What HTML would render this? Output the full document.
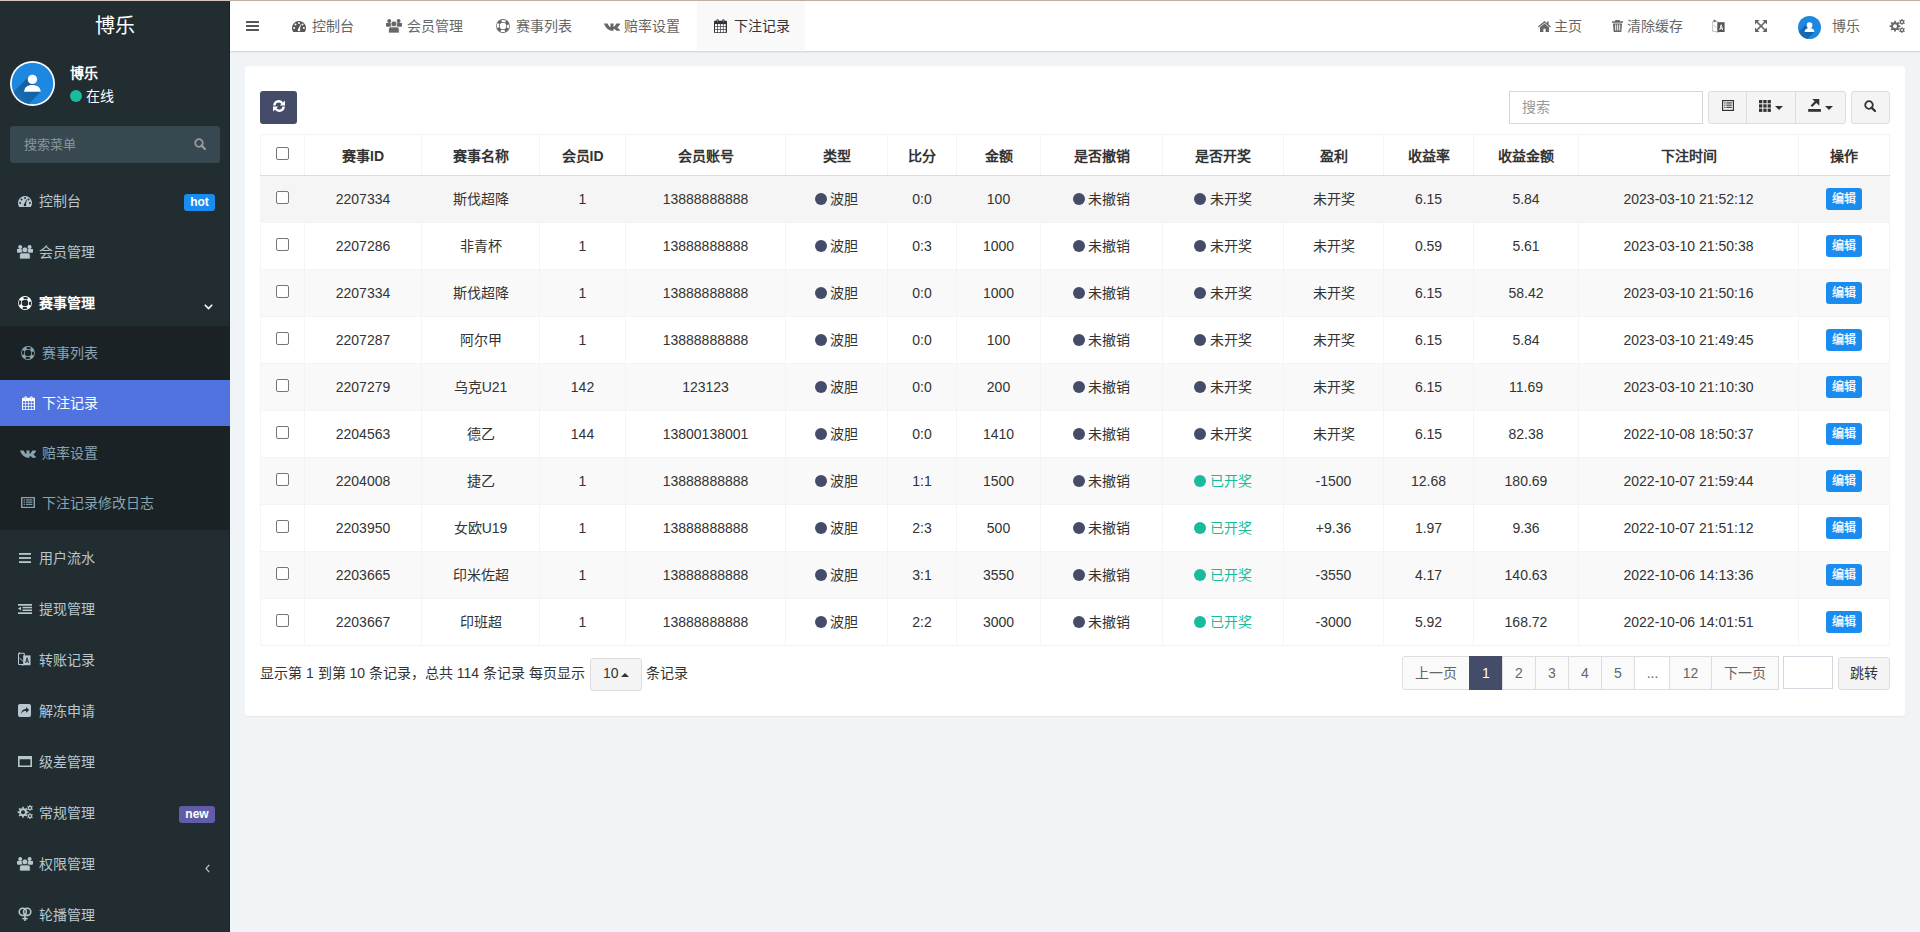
<!DOCTYPE html><html lang="zh-CN"><head><meta charset="utf-8"><title>下注记录</title><style>
*{box-sizing:border-box}
html,body{margin:0;padding:0}
body{width:1920px;height:932px;overflow:hidden;position:relative;background:#f1f4f6;font-family:"Liberation Sans",sans-serif;font-size:14px;color:#333}
.abs{position:absolute}
.t{position:absolute;white-space:nowrap;line-height:16px}
svg{display:block}
.ico{position:absolute}
#topline{position:absolute;left:0;top:0;width:1920px;height:1px;background:#bfaea8}
#topline2{position:absolute;left:0;top:0;width:230px;height:1px;background:#d6c6bf}
#sidebar{position:absolute;left:0;top:0;width:230px;height:932px;background:#222d32;border-right:1px solid #1a2429}
#header{position:absolute;left:230px;top:0;width:1690px;height:51px;background:#fff;box-shadow:0 1px 1px rgba(0,0,0,.08),0 2px 2px rgba(0,0,0,.03)}
.menu .t{color:#b8c7ce}
.sub .t{color:#8aa4af}
#panel{position:absolute;left:245px;top:66px;width:1660px;height:650px;background:#fff;border-radius:3px;box-shadow:0 1px 1px rgba(0,0,0,.05)}
table{position:absolute;left:260px;top:134px;border-collapse:collapse;table-layout:fixed;width:1630px}
td,th{border:1px solid #f4f4f4;text-align:center;padding:0;white-space:nowrap;font-size:14px;line-height:20px;color:#333;vertical-align:middle}
th{height:41px;font-weight:bold;border-bottom:1px solid #ddd;padding-top:1px}
td{height:47px}
tr.odd td{background:#f9f9f9}
tr.hov td{background:#f5f5f5}
.cb{display:inline-block;width:13px;height:13px;border:1px solid #767676;border-radius:2px;background:#fff;vertical-align:middle;position:relative;top:-3px}
.dot{display:inline-block;width:12px;height:12px;border-radius:50%;background:#444c69;vertical-align:middle;margin-right:3.6px;position:relative;top:-1px}
.dot.g{background:#18bc9c}
.green{color:#18bc9c}
.edit{display:inline-block;width:36px;height:22px;line-height:22px;background:#1a8cf0;border-radius:3px;color:#fff;font-size:12px;vertical-align:middle;-webkit-text-stroke:.25px #fff}
.btn{position:absolute;background:#f4f4f4;border:1px solid #ddd;border-radius:3px}
.pg{position:absolute;top:656px;height:34px;border:1px solid #ddd;background:#fafafa;color:#666;text-align:center;line-height:32px;font-size:14px}
</style></head><body>
<div id="sidebar">
<div class="t" style="left:95px;top:15px;font-size:20px;line-height:22px;color:#fff">博乐</div>
<div class="ico" style="left:10px;top:61px"><svg width="45" height="45" viewBox="0 0 45 45"><defs><clipPath id="cp45"><circle cx="22.5" cy="22.5" r="20.8"/></clipPath><linearGradient id="lg45" x1="0.75" y1="0.25" x2="0.1" y2="0.9"><stop offset="0" stop-color="#0d3f70" stop-opacity=".55"/><stop offset="1" stop-color="#0d3f70" stop-opacity=".15"/></linearGradient></defs><circle cx="22.5" cy="22.5" r="22.5" fill="#fff"/><circle cx="22.5" cy="22.5" r="20.8" fill="#1e88e0"/><g clip-path="url(#cp45)"><path d="M19 15.3 L30.7 30.8 L0.7 60.8 L-11 45.3 Z" fill="url(#lg45)"/></g><circle cx="22.4" cy="18.4" r="4.7" fill="#fff"/><path d="M14.1 30.8C14.1 26.6 17.6 23.9 22.4 23.9S30.7 26.6 30.7 30.8Z" fill="#fff"/></svg></div>
<div class="t" style="left:70px;top:65px;color:#fff;font-weight:bold">博乐</div>
<div class="ico" style="left:70px;top:90px"><svg width="12" height="12" viewBox="0 0 12 12"><circle cx="6" cy="6" r="6" fill="#18bc9c"/></svg></div>
<div class="t" style="left:86px;top:88px;color:#fff">在线</div>
<div class="abs" style="left:10px;top:126px;width:210px;height:37px;background:#374850;border-radius:3px"></div>
<div class="t" style="left:24px;top:137px;color:#8b979c;font-size:13px">搜索菜单</div>
<div class="ico" style="left:194px;top:138px"><svg width="12" height="12" viewBox="0 0 12 12"><circle cx="5" cy="5" r="3.8" fill="none" stroke="#999" stroke-width="1.8"/><line x1="7.6" y1="7.6" x2="11" y2="11" stroke="#999" stroke-width="2.2" stroke-linecap="round"/></svg></div>
<div class="ico" style="left:18px;top:196px"><svg width="14" height="11" viewBox="0 0 14 11"><path fill="#b8c7ce" d="M1.26 11A7 7 0 1 1 12.74 11Z"/><g fill="#222d32"><circle cx="7" cy="2.1" r="1"/><circle cx="3.5" cy="3.6" r="1"/><circle cx="10.5" cy="3.6" r="1"/><circle cx="2.1" cy="7.1" r="1"/><circle cx="11.9" cy="7.1" r="1"/><circle cx="7" cy="8.9" r="1.3"/><path d="M6.2 8.6L8.3 3.4 8.9 3.6 7.8 9z"/></g></svg></div><div class="t" style="left:39px;top:193px;color:#b8c7ce;">控制台</div><div class="abs" style="left:184px;top:194px;width:31px;height:17px;background:#1a8cf0;border-radius:3px;color:#fff;font-weight:bold;font-size:12px;line-height:17px;text-align:center">hot</div>
<div class="ico" style="left:17px;top:245px"><svg width="16" height="14" viewBox="0 0 16 14"><g fill="#b8c7ce"><circle cx="3.2" cy="2" r="2"/><circle cx="12.6" cy="2" r="2"/><path d="M0 4.2Q0 3.9 .4 3.9H5.3V7.8H1Q0 7.8 0 6.8z"/><path d="M16 4.2Q16 3.9 15.6 3.9H10.7V7.8H15Q16 7.8 16 6.8z"/></g><g fill="#b8c7ce" stroke="#222d32" stroke-width=".7"><circle cx="7.9" cy="4.9" r="2.9"/><path d="M2.6 14V9.9Q2.6 7.9 4.6 7.9H11.2Q13.2 7.9 13.2 9.9V14z"/></g></svg></div><div class="t" style="left:39px;top:244px;color:#b8c7ce;">会员管理</div>
<div class="ico" style="left:18px;top:296px"><svg width="14" height="14" viewBox="0 0 14 14"><circle cx="7" cy="7" r="5.1" fill="none" stroke="#fff" stroke-width="3.6"/><circle cx="7" cy="7" r="5.1" fill="none" stroke="#222d32" stroke-width="2.0" stroke-dasharray="4.2 3.81" stroke-dashoffset="2.1"/></svg></div><div class="t" style="left:39px;top:295px;color:#fff;font-weight:bold;">赛事管理</div><div class="ico" style="left:204px;top:304px"><svg width="9" height="6" viewBox="0 0 9 6"><path d="M.8 .8L4.5 4.5 8.2 .8" fill="none" stroke="#fff" stroke-width="1.6"/></svg></div>
<div class="abs" style="left:0;top:326px;width:229px;height:204px;background:#1a2226"></div>
<div class="abs" style="left:0;top:380px;width:230px;height:46px;background:#5073df"></div>
<div class="ico" style="left:21px;top:346px"><svg width="14" height="14" viewBox="0 0 14 14"><circle cx="7" cy="7" r="5.1" fill="none" stroke="#8aa4af" stroke-width="3.6"/><circle cx="7" cy="7" r="5.1" fill="none" stroke="#1a2226" stroke-width="2.0" stroke-dasharray="4.2 3.81" stroke-dashoffset="2.1"/></svg></div>
<div class="t" style="left:42px;top:345px;color:#8aa4af">赛事列表</div>
<div class="ico" style="left:22px;top:396px"><svg width="13" height="14" viewBox="0 0 13 14"><rect x="0" y="1.8" width="13" height="12.2" rx=".8" fill="#fff"/><rect x="1.00" y="5.10" width="2.2" height="2.25" fill="#5073df"/><rect x="1.00" y="8.05" width="2.2" height="2.25" fill="#5073df"/><rect x="1.00" y="11.00" width="2.2" height="2.25" fill="#5073df"/><rect x="3.85" y="5.10" width="2.2" height="2.25" fill="#5073df"/><rect x="3.85" y="8.05" width="2.2" height="2.25" fill="#5073df"/><rect x="3.85" y="11.00" width="2.2" height="2.25" fill="#5073df"/><rect x="6.70" y="5.10" width="2.2" height="2.25" fill="#5073df"/><rect x="6.70" y="8.05" width="2.2" height="2.25" fill="#5073df"/><rect x="6.70" y="11.00" width="2.2" height="2.25" fill="#5073df"/><rect x="9.55" y="5.10" width="2.2" height="2.25" fill="#5073df"/><rect x="9.55" y="8.05" width="2.2" height="2.25" fill="#5073df"/><rect x="9.55" y="11.00" width="2.2" height="2.25" fill="#5073df"/><rect x="2.5" y="0.3" width="2.2" height="3.6" rx="1.1" fill="#fff"/><rect x="8.3" y="0.3" width="2.2" height="3.6" rx="1.1" fill="#fff"/><rect x="3.3" y="1.1" width=".6" height="2.2" fill="#5073df" opacity=".6"/><rect x="9.1" y="1.1" width=".6" height="2.2" fill="#5073df" opacity=".6"/></svg></div>
<div class="t" style="left:42px;top:395px;color:#fff">下注记录</div>
<div class="ico" style="left:20px;top:450px"><svg width="16" height="8" viewBox="0 0 16 10" preserveAspectRatio="none"><path fill="#8aa4af" d="M0 .6h3.2c.2 0 .4.1.5.3.7 1.7 1.6 3.4 2.4 4.1.2.2.4.1.4-.2V1.2c0-.3-.2-.5-.4-.6h3.1c.2 0 .3.2.3.4v3.6c0 .3.2.4.4.2.9-.9 1.8-2.5 2.3-3.9.1-.2.2-.3.4-.3H16c.3 0 .4.2.3.5-.6 1.6-2.3 3.6-2.6 4-.2.3-.2.4 0 .7.3.4 2 1.9 2.3 3.5.1.3-.1.5-.3.5h-3c-.2 0-.4-.1-.5-.3-.7-1-1.5-2-2.2-2.3-.2-.1-.4 0-.4.3v1.9c0 .2-.2.4-.4.4H8.3C5.5 9.8 1.6 6.5 0 1 -.1.8 0 .6 0 .6z"/></svg></div>
<div class="t" style="left:42px;top:445px;color:#8aa4af">赔率设置</div>
<div class="ico" style="left:21px;top:497px"><svg width="14" height="11" viewBox="0 0 12 11" preserveAspectRatio="none"><rect x=".6" y=".6" width="10.8" height="9.8" fill="none" stroke="#8aa4af" stroke-width="1.2"/><g fill="#8aa4af"><rect x="2.2" y="2.4" width="1.3" height="1.1"/><rect x="4.3" y="2.4" width="5.5" height="1.1"/><rect x="2.2" y="4.6" width="1.3" height="1.1"/><rect x="4.3" y="4.6" width="5.5" height="1.1"/><rect x="2.2" y="6.8" width="1.3" height="1.1"/><rect x="4.3" y="6.8" width="5.5" height="1.1"/></g></svg></div>
<div class="t" style="left:42px;top:495px;color:#8aa4af">下注记录修改日志</div>
<div class="ico" style="left:19px;top:553px"><svg width="12" height="10" viewBox="0 0 12 10"><g fill="#b8c7ce"><rect y="0" width="12" height="1.8"/><rect y="4.1" width="12" height="1.8"/><rect y="8.2" width="12" height="1.8"/></g></svg></div>
<div class="t" style="left:39px;top:550px;color:#b8c7ce">用户流水</div>
<div class="ico" style="left:18px;top:604px"><svg width="14" height="10" viewBox="0 0 14 10"><g fill="#b8c7ce"><rect x="0" y="0" width="14" height="1.7"/><rect x="4.5" y="2.8" width="9.5" height="1.5"/><rect x="4.5" y="5.5" width="9.5" height="1.5"/><rect x="0" y="8.3" width="14" height="1.7"/><path d="M0 4.6L3 2.8v3.6z"/></g></svg></div>
<div class="t" style="left:39px;top:601px;color:#b8c7ce">提现管理</div>
<div class="ico" style="left:18px;top:652px"><svg width="13" height="14" viewBox="0 0 13 14"><path d="M.5 1.3h5.8v11.2H.5z" fill="none" stroke="#b8c7ce" stroke-width="1"/><path d="M1.8 5.8c.8 1.8 2 2.8 3.8 3.3" fill="none" stroke="#b8c7ce" stroke-width=".9"/><path d="M5.2 3.4h7.3v9.8H5.2z" fill="#b8c7ce"/><path d="M7.2 11l1.4-5.6h1L11 11h-1l-.3-1.3H8.5L8.2 11zm1.5-2.2h.8l-.4-1.7z" fill="#222d32"/><path d="M1 0l1.6 1.3L1 2.4z" fill="#b8c7ce"/><path d="M3 13.2l2.2-.8v1.4z" fill="#b8c7ce"/></svg></div>
<div class="t" style="left:39px;top:652px;color:#b8c7ce">转账记录</div>
<div class="ico" style="left:18px;top:704px"><svg width="13" height="13" viewBox="0 0 13 13"><rect x="0" y="0" width="13" height="13" rx="2" fill="#b8c7ce"/><path d="M3 10.2C3.3 6.8 5.3 5 8 5V3l3.2 2.9L8 8.8V6.8C5.9 6.8 4.3 7.8 3 10.2z" fill="#222d32"/></svg></div>
<div class="t" style="left:39px;top:703px;color:#b8c7ce">解冻申请</div>
<div class="ico" style="left:18px;top:756px"><svg width="14" height="11" viewBox="0 0 14 11"><path fill="#b8c7ce" fill-rule="evenodd" d="M0 0h14v11H0zM1.6 3.2v6.2h10.8V3.2z"/></svg></div>
<div class="t" style="left:39px;top:754px;color:#b8c7ce">级差管理</div>
<div class="ico" style="left:17px;top:805px"><svg width="16" height="14" viewBox="0 0 16 14"><circle cx="6" cy="7.2" r="3.9" fill="#b8c7ce"/><rect x="5.15" y="1.80" width="1.7" height="2.10" fill="#b8c7ce" transform="rotate(0.0 6 7.2)"/><rect x="5.15" y="1.80" width="1.7" height="2.10" fill="#b8c7ce" transform="rotate(45.0 6 7.2)"/><rect x="5.15" y="1.80" width="1.7" height="2.10" fill="#b8c7ce" transform="rotate(90.0 6 7.2)"/><rect x="5.15" y="1.80" width="1.7" height="2.10" fill="#b8c7ce" transform="rotate(135.0 6 7.2)"/><rect x="5.15" y="1.80" width="1.7" height="2.10" fill="#b8c7ce" transform="rotate(180.0 6 7.2)"/><rect x="5.15" y="1.80" width="1.7" height="2.10" fill="#b8c7ce" transform="rotate(225.0 6 7.2)"/><rect x="5.15" y="1.80" width="1.7" height="2.10" fill="#b8c7ce" transform="rotate(270.0 6 7.2)"/><rect x="5.15" y="1.80" width="1.7" height="2.10" fill="#b8c7ce" transform="rotate(315.0 6 7.2)"/><circle cx="6" cy="7.2" r="2.0" fill="#222d32"/><circle cx="13" cy="2.9" r="2.2" fill="#b8c7ce"/><rect x="12.45" y="-0.10" width="1.1" height="1.40" fill="#b8c7ce" transform="rotate(0.0 13 2.9)"/><rect x="12.45" y="-0.10" width="1.1" height="1.40" fill="#b8c7ce" transform="rotate(60.0 13 2.9)"/><rect x="12.45" y="-0.10" width="1.1" height="1.40" fill="#b8c7ce" transform="rotate(120.0 13 2.9)"/><rect x="12.45" y="-0.10" width="1.1" height="1.40" fill="#b8c7ce" transform="rotate(180.0 13 2.9)"/><rect x="12.45" y="-0.10" width="1.1" height="1.40" fill="#b8c7ce" transform="rotate(240.0 13 2.9)"/><rect x="12.45" y="-0.10" width="1.1" height="1.40" fill="#b8c7ce" transform="rotate(300.0 13 2.9)"/><circle cx="13" cy="2.9" r="1.0" fill="#222d32"/><circle cx="13" cy="11.1" r="2.2" fill="#b8c7ce"/><rect x="12.45" y="8.10" width="1.1" height="1.40" fill="#b8c7ce" transform="rotate(0.0 13 11.1)"/><rect x="12.45" y="8.10" width="1.1" height="1.40" fill="#b8c7ce" transform="rotate(60.0 13 11.1)"/><rect x="12.45" y="8.10" width="1.1" height="1.40" fill="#b8c7ce" transform="rotate(120.0 13 11.1)"/><rect x="12.45" y="8.10" width="1.1" height="1.40" fill="#b8c7ce" transform="rotate(180.0 13 11.1)"/><rect x="12.45" y="8.10" width="1.1" height="1.40" fill="#b8c7ce" transform="rotate(240.0 13 11.1)"/><rect x="12.45" y="8.10" width="1.1" height="1.40" fill="#b8c7ce" transform="rotate(300.0 13 11.1)"/><circle cx="13" cy="11.1" r="1.0" fill="#222d32"/></svg></div>
<div class="t" style="left:39px;top:805px;color:#b8c7ce">常规管理</div>
<div class="ico" style="left:17px;top:857px"><svg width="16" height="14" viewBox="0 0 16 14"><g fill="#b8c7ce"><circle cx="3.2" cy="2" r="2"/><circle cx="12.6" cy="2" r="2"/><path d="M0 4.2Q0 3.9 .4 3.9H5.3V7.8H1Q0 7.8 0 6.8z"/><path d="M16 4.2Q16 3.9 15.6 3.9H10.7V7.8H15Q16 7.8 16 6.8z"/></g><g fill="#b8c7ce" stroke="#222d32" stroke-width=".7"><circle cx="7.9" cy="4.9" r="2.9"/><path d="M2.6 14V9.9Q2.6 7.9 4.6 7.9H11.2Q13.2 7.9 13.2 9.9V14z"/></g></svg></div>
<div class="t" style="left:39px;top:856px;color:#b8c7ce">权限管理</div>
<div class="ico" style="left:18px;top:907px"><svg width="14" height="14" viewBox="0 0 14 14"><g fill="none" stroke="#b8c7ce" stroke-width="1.6"><circle cx="4.8" cy="4.8" r="3.6"/><circle cx="9.2" cy="4.8" r="3.6"/><line x1="7" y1="8.4" x2="7" y2="14"/><line x1="4.4" y1="11.6" x2="9.6" y2="11.6"/></g></svg></div>
<div class="t" style="left:39px;top:907px;color:#b8c7ce">轮播管理</div>
<div class="abs" style="left:179px;top:806px;width:36px;height:17px;background:#605ca8;border-radius:3px;color:#fff;font-weight:bold;font-size:12px;line-height:17px;text-align:center">new</div>
<div class="ico" style="left:205px;top:864px"><svg width="5" height="9" viewBox="0 0 5 9"><path d="M4.2 .8L1 4.5l3.2 3.7" fill="none" stroke="#b8c7ce" stroke-width="1.2"/></svg></div>
</div>
<div id="header"></div>
<div class="abs" style="left:697px;top:1px;width:108px;height:49px;background:#f9f9f9"></div>
<div class="ico" style="left:246px;top:21px"><svg width="13" height="10" viewBox="0 0 13 10"><g fill="#555"><rect x="0" y="0" width="13" height="2" rx="0.5"/><rect x="0" y="4" width="13" height="2" rx="0.5"/><rect x="0" y="8" width="13" height="2" rx="0.5"/></g></svg></div>
<div class="ico" style="left:292px;top:21px"><svg width="14" height="11" viewBox="0 0 14 11"><path fill="#555" d="M1.26 11A7 7 0 1 1 12.74 11Z"/><g fill="#fff"><circle cx="7" cy="2.1" r="1"/><circle cx="3.5" cy="3.6" r="1"/><circle cx="10.5" cy="3.6" r="1"/><circle cx="2.1" cy="7.1" r="1"/><circle cx="11.9" cy="7.1" r="1"/><circle cx="7" cy="8.9" r="1.3"/><path d="M6.2 8.6L8.3 3.4 8.9 3.6 7.8 9z"/></g></svg></div>
<div class="t" style="left:312px;top:18px;color:#666">控制台</div>
<div class="ico" style="left:386px;top:19px"><svg width="16" height="14" viewBox="0 0 16 14"><g fill="#666"><circle cx="3.2" cy="2" r="2"/><circle cx="12.6" cy="2" r="2"/><path d="M0 4.2Q0 3.9 .4 3.9H5.3V7.8H1Q0 7.8 0 6.8z"/><path d="M16 4.2Q16 3.9 15.6 3.9H10.7V7.8H15Q16 7.8 16 6.8z"/></g><g fill="#666" stroke="#fff" stroke-width=".7"><circle cx="7.9" cy="4.9" r="2.9"/><path d="M2.6 14V9.9Q2.6 7.9 4.6 7.9H11.2Q13.2 7.9 13.2 9.9V14z"/></g></svg></div>
<div class="t" style="left:407px;top:18px;color:#666">会员管理</div>
<div class="ico" style="left:496px;top:19px"><svg width="14" height="14" viewBox="0 0 14 14"><circle cx="7" cy="7" r="5.1" fill="none" stroke="#666" stroke-width="3.6"/><circle cx="7" cy="7" r="5.1" fill="none" stroke="#fff" stroke-width="2.0" stroke-dasharray="4.2 3.81" stroke-dashoffset="2.1"/></svg></div>
<div class="t" style="left:516px;top:18px;color:#666">赛事列表</div>
<div class="ico" style="left:604px;top:23px"><svg width="16" height="8" viewBox="0 0 16 10" preserveAspectRatio="none"><path fill="#666" d="M0 .6h3.2c.2 0 .4.1.5.3.7 1.7 1.6 3.4 2.4 4.1.2.2.4.1.4-.2V1.2c0-.3-.2-.5-.4-.6h3.1c.2 0 .3.2.3.4v3.6c0 .3.2.4.4.2.9-.9 1.8-2.5 2.3-3.9.1-.2.2-.3.4-.3H16c.3 0 .4.2.3.5-.6 1.6-2.3 3.6-2.6 4-.2.3-.2.4 0 .7.3.4 2 1.9 2.3 3.5.1.3-.1.5-.3.5h-3c-.2 0-.4-.1-.5-.3-.7-1-1.5-2-2.2-2.3-.2-.1-.4 0-.4.3v1.9c0 .2-.2.4-.4.4H8.3C5.5 9.8 1.6 6.5 0 1 -.1.8 0 .6 0 .6z"/></svg></div>
<div class="t" style="left:624px;top:18px;color:#666">赔率设置</div>
<div class="ico" style="left:714px;top:19px"><svg width="13" height="14" viewBox="0 0 13 14"><rect x="0" y="1.8" width="13" height="12.2" rx=".8" fill="#333"/><rect x="1.00" y="5.10" width="2.2" height="2.25" fill="#fff"/><rect x="1.00" y="8.05" width="2.2" height="2.25" fill="#fff"/><rect x="1.00" y="11.00" width="2.2" height="2.25" fill="#fff"/><rect x="3.85" y="5.10" width="2.2" height="2.25" fill="#fff"/><rect x="3.85" y="8.05" width="2.2" height="2.25" fill="#fff"/><rect x="3.85" y="11.00" width="2.2" height="2.25" fill="#fff"/><rect x="6.70" y="5.10" width="2.2" height="2.25" fill="#fff"/><rect x="6.70" y="8.05" width="2.2" height="2.25" fill="#fff"/><rect x="6.70" y="11.00" width="2.2" height="2.25" fill="#fff"/><rect x="9.55" y="5.10" width="2.2" height="2.25" fill="#fff"/><rect x="9.55" y="8.05" width="2.2" height="2.25" fill="#fff"/><rect x="9.55" y="11.00" width="2.2" height="2.25" fill="#fff"/><rect x="2.5" y="0.3" width="2.2" height="3.6" rx="1.1" fill="#333"/><rect x="8.3" y="0.3" width="2.2" height="3.6" rx="1.1" fill="#333"/><rect x="3.3" y="1.1" width=".6" height="2.2" fill="#fff" opacity=".6"/><rect x="9.1" y="1.1" width=".6" height="2.2" fill="#fff" opacity=".6"/></svg></div>
<div class="t" style="left:734px;top:18px;color:#333">下注记录</div>
<div class="ico" style="left:1538px;top:21px"><svg width="13" height="11" viewBox="0 0 13 11"><path fill="#666" d="M6.5 0L0 5.4l.8 1 5.7-4.7 5.7 4.7.8-1L10.6 3.6V.6H9v1.7zM2 6.3V11h3.4V7.8h2.2V11H11V6.3L6.5 2.6z"/></svg></div>
<div class="t" style="left:1554px;top:18px;color:#666">主页</div>
<div class="ico" style="left:1612px;top:20px"><svg width="11" height="12" viewBox="0 0 11 12"><path fill="#666" fill-rule="evenodd" d="M3.5 0h4l.6 1.3H11v1.4H0V1.3h2.9zM1 3.4h9l-.6 8c0 .4-.4.6-.8.6H2.4c-.4 0-.8-.2-.8-.6zM3.2 4.6v6h1v-6zm2 0v6h1v-6zm2 0v6h1v-6z"/></svg></div>
<div class="t" style="left:1627px;top:18px;color:#666">清除缓存</div>
<div class="ico" style="left:1712px;top:19px"><svg width="13" height="14" viewBox="0 0 13 14"><path d="M.6 2.8h5.4v9.6H.6z" fill="none" stroke="#b8b8c8" stroke-width=".9"/><path d="M2 6c.8 1.6 1.8 2.6 3.4 3" fill="none" stroke="#d0b890" stroke-width=".8"/><path d="M5.4 3.2h7.2v9.8H5.4z" fill="#555"/><path d="M7.3 11l1.4-5.6h1L11.1 11h-1l-.3-1.3H8.6L8.3 11zm1.5-2.2h.8l-.4-1.7z" fill="#fff"/><path d="M1.6 .6l3.2 1.4-3.2 1z" fill="#555"/><path d="M4 13.4h3.4" stroke="#c8c8d0" stroke-width=".7"/></svg></div>
<div class="ico" style="left:1755px;top:20px"><svg width="12" height="12" viewBox="0 0 12 12"><g fill="#666"><path d="M0 0h4.6L0 4.6z"/><path d="M12 0v4.6L7.4 0z"/><path d="M0 12V7.4L4.6 12z"/><path d="M12 12H7.4L12 7.4z"/></g><g stroke="#666" stroke-width="1.7"><line x1="1.5" y1="1.5" x2="10.5" y2="10.5"/><line x1="10.5" y1="1.5" x2="1.5" y2="10.5"/></g></svg></div>
<div class="ico" style="left:1798px;top:16px"><svg width="23" height="23" viewBox="0 0 45 45"><defs><clipPath id="cps"><circle cx="22.5" cy="22.5" r="22.5"/></clipPath><linearGradient id="lgs" x1="0.75" y1="0.25" x2="0.1" y2="0.9"><stop offset="0" stop-color="#0d3f70" stop-opacity=".55"/><stop offset="1" stop-color="#0d3f70" stop-opacity=".15"/></linearGradient></defs><circle cx="22.5" cy="22.5" r="22.5" fill="#1e88e0"/><g clip-path="url(#cps)"><path d="M18 14.3 L31.5 31.5 L1.5 61.5 L-12 44.3 Z" fill="url(#lgs)"/></g><circle cx="22.5" cy="18" r="5.6" fill="#fff"/><path d="M13 31.5C13 26.5 17 23.6 22.5 23.6S32 26.5 32 31.5Z" fill="#fff"/></svg></div>
<div class="t" style="left:1832px;top:18px;color:#666">博乐</div>
<div class="ico" style="left:1889px;top:19px"><svg width="16" height="14" viewBox="0 0 16 14"><circle cx="6" cy="7.2" r="3.9" fill="#666"/><rect x="5.15" y="1.80" width="1.7" height="2.10" fill="#666" transform="rotate(0.0 6 7.2)"/><rect x="5.15" y="1.80" width="1.7" height="2.10" fill="#666" transform="rotate(45.0 6 7.2)"/><rect x="5.15" y="1.80" width="1.7" height="2.10" fill="#666" transform="rotate(90.0 6 7.2)"/><rect x="5.15" y="1.80" width="1.7" height="2.10" fill="#666" transform="rotate(135.0 6 7.2)"/><rect x="5.15" y="1.80" width="1.7" height="2.10" fill="#666" transform="rotate(180.0 6 7.2)"/><rect x="5.15" y="1.80" width="1.7" height="2.10" fill="#666" transform="rotate(225.0 6 7.2)"/><rect x="5.15" y="1.80" width="1.7" height="2.10" fill="#666" transform="rotate(270.0 6 7.2)"/><rect x="5.15" y="1.80" width="1.7" height="2.10" fill="#666" transform="rotate(315.0 6 7.2)"/><circle cx="6" cy="7.2" r="2.0" fill="#fff"/><circle cx="13" cy="2.9" r="2.2" fill="#666"/><rect x="12.45" y="-0.10" width="1.1" height="1.40" fill="#666" transform="rotate(0.0 13 2.9)"/><rect x="12.45" y="-0.10" width="1.1" height="1.40" fill="#666" transform="rotate(60.0 13 2.9)"/><rect x="12.45" y="-0.10" width="1.1" height="1.40" fill="#666" transform="rotate(120.0 13 2.9)"/><rect x="12.45" y="-0.10" width="1.1" height="1.40" fill="#666" transform="rotate(180.0 13 2.9)"/><rect x="12.45" y="-0.10" width="1.1" height="1.40" fill="#666" transform="rotate(240.0 13 2.9)"/><rect x="12.45" y="-0.10" width="1.1" height="1.40" fill="#666" transform="rotate(300.0 13 2.9)"/><circle cx="13" cy="2.9" r="1.0" fill="#fff"/><circle cx="13" cy="11.1" r="2.2" fill="#666"/><rect x="12.45" y="8.10" width="1.1" height="1.40" fill="#666" transform="rotate(0.0 13 11.1)"/><rect x="12.45" y="8.10" width="1.1" height="1.40" fill="#666" transform="rotate(60.0 13 11.1)"/><rect x="12.45" y="8.10" width="1.1" height="1.40" fill="#666" transform="rotate(120.0 13 11.1)"/><rect x="12.45" y="8.10" width="1.1" height="1.40" fill="#666" transform="rotate(180.0 13 11.1)"/><rect x="12.45" y="8.10" width="1.1" height="1.40" fill="#666" transform="rotate(240.0 13 11.1)"/><rect x="12.45" y="8.10" width="1.1" height="1.40" fill="#666" transform="rotate(300.0 13 11.1)"/><circle cx="13" cy="11.1" r="1.0" fill="#fff"/></svg></div>
<div id="panel"></div>
<div class="abs" style="left:260px;top:91px;width:37px;height:33px;background:#444c69;border-radius:3px"></div>
<div class="ico" style="left:273px;top:100px"><svg width="12" height="12" viewBox="0 0 12 12"><g fill="none" stroke="#fff" stroke-width="2.4"><path d="M1.4 5.6A4.3 4.3 0 0 1 9.4 3.4"/><path d="M10.6 6.4A4.3 4.3 0 0 1 2.6 8.6"/></g><path fill="#fff" d="M12 .4v5.2H6.8z"/><path fill="#fff" d="M0 11.6V6.4h5.2z"/></svg></div>
<div class="abs" style="left:1509px;top:91px;width:194px;height:33px;border:1px solid #d2d6de;background:#fff"></div>
<div class="t" style="left:1522px;top:99px;color:#999">搜索</div>
<div class="btn" style="left:1708px;top:91px;width:138px;height:33px"></div>
<div class="abs" style="left:1746px;top:91px;width:1px;height:33px;background:#ddd"></div>
<div class="abs" style="left:1795px;top:91px;width:1px;height:33px;background:#ddd"></div>
<div class="ico" style="left:1722px;top:100px"><svg width="12" height="11" viewBox="0 0 12 11" preserveAspectRatio="none"><rect x=".6" y=".6" width="10.8" height="9.8" fill="none" stroke="#333" stroke-width="1.2"/><g fill="#333"><rect x="2.2" y="2.4" width="1.3" height="1.1"/><rect x="4.3" y="2.4" width="5.5" height="1.1"/><rect x="2.2" y="4.6" width="1.3" height="1.1"/><rect x="4.3" y="4.6" width="5.5" height="1.1"/><rect x="2.2" y="6.8" width="1.3" height="1.1"/><rect x="4.3" y="6.8" width="5.5" height="1.1"/></g></svg></div>
<div class="ico" style="left:1759px;top:100px"><svg width="12" height="12" viewBox="0 0 12 12"><rect x="0.0" y="0.0" width="3.3" height="3.3" fill="#333"/><rect x="0.0" y="4.3" width="3.3" height="3.3" fill="#333"/><rect x="0.0" y="8.6" width="3.3" height="3.3" fill="#333"/><rect x="4.3" y="0.0" width="3.3" height="3.3" fill="#333"/><rect x="4.3" y="4.3" width="3.3" height="3.3" fill="#333"/><rect x="4.3" y="8.6" width="3.3" height="3.3" fill="#333"/><rect x="8.6" y="0.0" width="3.3" height="3.3" fill="#333"/><rect x="8.6" y="4.3" width="3.3" height="3.3" fill="#333"/><rect x="8.6" y="8.6" width="3.3" height="3.3" fill="#333"/></svg></div>
<div class="ico" style="left:1775px;top:106px"><svg width="8" height="4" viewBox="0 0 8 4"><path d="M0 0h8L4 4z" fill="#333"/></svg></div>
<div class="ico" style="left:1808px;top:98px"><svg width="13" height="14" viewBox="0 0 13 14"><g fill="#333"><rect x="0.2" y="11" width="12.7" height="2.8"/><path d="M4.2 .9H11.3V7.8z"/></g><line x1="8" y1="3.6" x2="3.4" y2="8.2" stroke="#333" stroke-width="2.2"/></svg></div>
<div class="ico" style="left:1825px;top:106px"><svg width="8" height="4" viewBox="0 0 8 4"><path d="M0 0h8L4 4z" fill="#333"/></svg></div>
<div class="btn" style="left:1851px;top:91px;width:39px;height:33px"></div>
<div class="ico" style="left:1864px;top:100px"><svg width="12" height="12" viewBox="0 0 12 12"><circle cx="5" cy="5" r="3.8" fill="none" stroke="#333" stroke-width="1.8"/><line x1="7.6" y1="7.6" x2="11" y2="11" stroke="#333" stroke-width="2.2" stroke-linecap="round"/></svg></div>
<table><colgroup><col style="width:44px"><col style="width:117px"><col style="width:118px"><col style="width:86px"><col style="width:160px"><col style="width:102px"><col style="width:69px"><col style="width:84px"><col style="width:122px"><col style="width:121px"><col style="width:100px"><col style="width:90px"><col style="width:105px"><col style="width:220px"><col style="width:91px"></colgroup><thead><tr><th><span class="cb"></span></th><th>赛事ID</th><th>赛事名称</th><th>会员ID</th><th>会员账号</th><th>类型</th><th>比分</th><th>金额</th><th>是否撤销</th><th>是否开奖</th><th>盈利</th><th>收益率</th><th>收益金额</th><th>下注时间</th><th>操作</th></tr></thead><tbody><tr class="hov"><td><span class="cb"></span></td><td>2207334</td><td>斯伐超降</td><td>1</td><td>13888888888</td><td><span class="dot"></span>波胆</td><td>0:0</td><td>100</td><td><span class="dot"></span>未撤销</td><td><span class="dot"></span>未开奖</td><td>未开奖</td><td>6.15</td><td>5.84</td><td>2023-03-10 21:52:12</td><td><span class="edit">编辑</span></td></tr><tr class=""><td><span class="cb"></span></td><td>2207286</td><td>非青杯</td><td>1</td><td>13888888888</td><td><span class="dot"></span>波胆</td><td>0:3</td><td>1000</td><td><span class="dot"></span>未撤销</td><td><span class="dot"></span>未开奖</td><td>未开奖</td><td>0.59</td><td>5.61</td><td>2023-03-10 21:50:38</td><td><span class="edit">编辑</span></td></tr><tr class="odd"><td><span class="cb"></span></td><td>2207334</td><td>斯伐超降</td><td>1</td><td>13888888888</td><td><span class="dot"></span>波胆</td><td>0:0</td><td>1000</td><td><span class="dot"></span>未撤销</td><td><span class="dot"></span>未开奖</td><td>未开奖</td><td>6.15</td><td>58.42</td><td>2023-03-10 21:50:16</td><td><span class="edit">编辑</span></td></tr><tr class=""><td><span class="cb"></span></td><td>2207287</td><td>阿尔甲</td><td>1</td><td>13888888888</td><td><span class="dot"></span>波胆</td><td>0:0</td><td>100</td><td><span class="dot"></span>未撤销</td><td><span class="dot"></span>未开奖</td><td>未开奖</td><td>6.15</td><td>5.84</td><td>2023-03-10 21:49:45</td><td><span class="edit">编辑</span></td></tr><tr class="odd"><td><span class="cb"></span></td><td>2207279</td><td>乌克U21</td><td>142</td><td>123123</td><td><span class="dot"></span>波胆</td><td>0:0</td><td>200</td><td><span class="dot"></span>未撤销</td><td><span class="dot"></span>未开奖</td><td>未开奖</td><td>6.15</td><td>11.69</td><td>2023-03-10 21:10:30</td><td><span class="edit">编辑</span></td></tr><tr class=""><td><span class="cb"></span></td><td>2204563</td><td>德乙</td><td>144</td><td>13800138001</td><td><span class="dot"></span>波胆</td><td>0:0</td><td>1410</td><td><span class="dot"></span>未撤销</td><td><span class="dot"></span>未开奖</td><td>未开奖</td><td>6.15</td><td>82.38</td><td>2022-10-08 18:50:37</td><td><span class="edit">编辑</span></td></tr><tr class="odd"><td><span class="cb"></span></td><td>2204008</td><td>捷乙</td><td>1</td><td>13888888888</td><td><span class="dot"></span>波胆</td><td>1:1</td><td>1500</td><td><span class="dot"></span>未撤销</td><td><span class="dot g"></span><span class="green">已开奖</span></td><td>-1500</td><td>12.68</td><td>180.69</td><td>2022-10-07 21:59:44</td><td><span class="edit">编辑</span></td></tr><tr class=""><td><span class="cb"></span></td><td>2203950</td><td>女欧U19</td><td>1</td><td>13888888888</td><td><span class="dot"></span>波胆</td><td>2:3</td><td>500</td><td><span class="dot"></span>未撤销</td><td><span class="dot g"></span><span class="green">已开奖</span></td><td>+9.36</td><td>1.97</td><td>9.36</td><td>2022-10-07 21:51:12</td><td><span class="edit">编辑</span></td></tr><tr class="odd"><td><span class="cb"></span></td><td>2203665</td><td>印米佐超</td><td>1</td><td>13888888888</td><td><span class="dot"></span>波胆</td><td>3:1</td><td>3550</td><td><span class="dot"></span>未撤销</td><td><span class="dot g"></span><span class="green">已开奖</span></td><td>-3550</td><td>4.17</td><td>140.63</td><td>2022-10-06 14:13:36</td><td><span class="edit">编辑</span></td></tr><tr class=""><td><span class="cb"></span></td><td>2203667</td><td>印班超</td><td>1</td><td>13888888888</td><td><span class="dot"></span>波胆</td><td>2:2</td><td>3000</td><td><span class="dot"></span>未撤销</td><td><span class="dot g"></span><span class="green">已开奖</span></td><td>-3000</td><td>5.92</td><td>168.72</td><td>2022-10-06 14:01:51</td><td><span class="edit">编辑</span></td></tr></tbody></table>
<div class="t" style="left:260px;top:665px;color:#333">显示第 1 到第 10 条记录，总共 114 条记录 每页显示</div>
<div class="abs" style="left:590px;top:658px;width:52px;height:33px;background:#f4f4f4;border:1px solid #ddd;border-radius:3px"></div>
<div class="t" style="left:603px;top:665px;color:#333">10</div>
<div class="ico" style="left:621px;top:673px;transform:rotate(180deg)"><svg width="8" height="4" viewBox="0 0 8 4"><path d="M0 0h8L4 4z" fill="#333"/></svg></div>
<div class="t" style="left:646px;top:665px;color:#333">条记录</div>
<div class="pg" style="left:1402px;width:68px;border-radius:3px 0 0 3px;">上一页</div>
<div class="pg" style="left:1469px;width:34px;background:#444c69;border-color:#444c69;color:#fff;">1</div>
<div class="pg" style="left:1502px;width:34px;">2</div>
<div class="pg" style="left:1535px;width:34px;">3</div>
<div class="pg" style="left:1568px;width:34px;">4</div>
<div class="pg" style="left:1601px;width:34px;">5</div>
<div class="pg" style="left:1634px;width:37px;background:#fff;">...</div>
<div class="pg" style="left:1669px;width:43px;">12</div>
<div class="pg" style="left:1711px;width:68px;">下一页</div>
<div class="abs" style="left:1783px;top:656px;width:50px;height:33px;border:1px solid #d2d6de;background:#fff"></div>
<div class="btn" style="left:1838px;top:657px;width:52px;height:33px;text-align:center;line-height:31px;color:#333">跳转</div>
<div id="topline"></div><div id="topline2"></div>
</body></html>
